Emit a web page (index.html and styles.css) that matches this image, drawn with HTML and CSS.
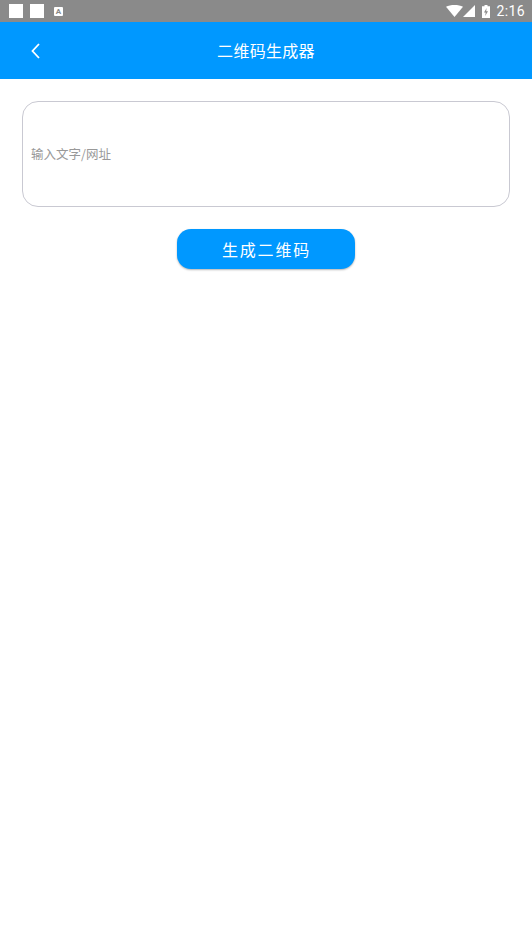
FILE: index.html
```html
<!DOCTYPE html>
<html lang="zh-CN">

<head>
    <meta charset="UTF-8">
    <meta name="viewport" content="width=device-width, initial-scale=1.0">
    <title>二维码生成器</title>
    <link rel="stylesheet" href="styles.css">
</head>

<body>
    <div class="statusbar">
        <div class="status-left">
            <span class="note"></span>
            <span class="note"></span>
            <span class="mini">A</span>
        </div>
        <div class="status-right">
            <svg class="wifi" width="17" height="12" viewBox="0 0 17 12">
                <path d="M0 1.8C2.3 .6 5.2 0 8.5 0s6.2 .6 8.5 1.8L8.5 12z" fill="#fff" />
            </svg>
            <svg class="signal" width="12" height="12" viewBox="0 0 12 12">
                <path d="M12 0V12H0z" fill="#fff" />
            </svg>
            <svg class="battery" width="8" height="13" viewBox="0 0 8 13">
                <path d="M2.5 0h3v1.2H8V13H0V1.2h2.5z" fill="#fff" />
                <path d="M4.6 3 2 7.6h1.7L3.2 11 6 6.2H4.2z" fill="#8a8a8a" />
            </svg>
            <span class="time">2:16</span>
        </div>
    </div>

    <div class="titlebar">
        <svg class="back" width="10" height="16" viewBox="0 0 10 16">
            <path d="M8 1 1.5 8 8 15" fill="none" stroke="#fff" stroke-width="1.8" />
        </svg>
        <h1>二维码生成器</h1>
    </div>

    <div class="content">
        <div class="inputbox">输入文字/网址</div>
        <div class="genbtn">生成二维码</div>
    </div>
</body>

</html>
```

FILE: styles.css
```css
* {
    margin: 0;
    padding: 0;
    box-sizing: border-box;
}

body {
    width: 532px;
    height: 944px;
    background-color: #fff;
    font-family: "Noto Sans CJK SC", "Roboto", sans-serif;
    overflow: hidden;
}

.statusbar {
    height: 22px;
    background-color: #8a8a8a;
    display: flex;
    align-items: center;
    justify-content: space-between;
    padding: 0 7px 0 9px;
}

.status-left,
.status-right {
    display: flex;
    align-items: center;
}

.note {
    width: 14px;
    height: 14px;
    background-color: #fff;
    margin-right: 7px;
}

.mini {
    width: 9px;
    height: 9px;
    margin-left: 3px;
    background-color: #fff;
    border-radius: 1px;
    color: #888;
    font-family: "Roboto", sans-serif;
    font-size: 8px;
    font-weight: 700;
    line-height: 9px;
    text-align: center;
}

.signal {
    margin-right: 7px;
}

.battery {
    margin-right: 6px;
}

.time {
    color: #fff;
    font-family: "Roboto", sans-serif;
    font-size: 14px;
    letter-spacing: .4px;
}

.titlebar {
    height: 57px;
    background-color: #0098ff;
    display: flex;
    align-items: center;
    justify-content: center;
    position: relative;
    padding-bottom: 2px;
}

.back {
    position: absolute;
    left: 31px;
    top: 21px;
}

.titlebar h1 {
    color: #fff;
    font-size: 16px;
    font-weight: 400;
    letter-spacing: .3px;
}

.content {
    padding: 22px 22px 0;
    display: flex;
    flex-direction: column;
    align-items: center;
}

.inputbox {
    width: 488px;
    height: 106px;
    border: 1px solid #c9c9d2;
    border-radius: 16px;
    padding-left: 8px;
    padding-bottom: 2px;
    display: flex;
    align-items: center;
    color: #999;
    font-size: 12.5px;
}

.genbtn {
    width: 178px;
    height: 40px;
    margin-top: 22px;
    padding-left: 1px;
    background-color: #0098ff;
    border-radius: 14px;
    box-shadow: 0 1px 2px rgba(0, 0, 0, .3);
    color: #fff;
    font-size: 16px;
    letter-spacing: 1.8px;
    line-height: 40px;
    text-align: center;
}
```
